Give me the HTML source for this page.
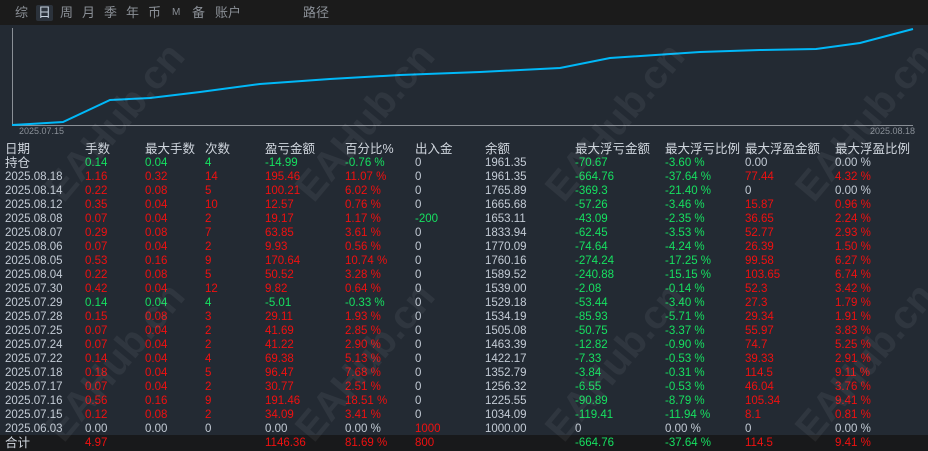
<!DOCTYPE html>
<html><head><meta charset="utf-8"><style>
*{margin:0;padding:0;box-sizing:border-box}
body{width:928px;height:450px;overflow:hidden;background:#232a33;font-family:"Liberation Sans","Noto Sans CJK SC",sans-serif;position:relative}
.top{position:absolute;left:0;top:0;width:928px;height:25px;background:#1b1b1b}
.tab{position:absolute;top:5px;font-size:13px;color:#8a8f96;line-height:16px}
.sel{background:#2b323b;color:#c8d4e0;border-radius:2px;padding:0 2px}
.r{position:absolute;left:0;width:928px;height:14px;font-size:11.5px;line-height:14px;color:#c4ccd6}
.r span{position:absolute;top:0;white-space:nowrap}
.h{font-size:12.5px;color:#d0d6de}
.g{color:#16e060}.d{color:#f01010}
.c1{left:5px}.c2{left:85px}.c3{left:145px}.c4{left:205px}.c5{left:265px}.c6{left:345px}.c7{left:415px}.c8{left:485px}.c9{left:575px}.c10{left:665px}.c11{left:745px}.c12{left:835px}
.tot{background:#18191b;height:16px;top:435px}
.wm{position:absolute;font-size:40px;font-weight:bold;color:rgba(255,255,255,0.06);transform:rotate(-50deg);white-space:nowrap;font-family:"Liberation Sans",sans-serif}
</style></head><body>
<div class="top"></div>
<span class="tab" style="left:15px">综</span>
<span class="tab sel" style="left:36px">日</span>
<span class="tab" style="left:60px">周</span>
<span class="tab" style="left:82px">月</span>
<span class="tab" style="left:104px">季</span>
<span class="tab" style="left:126px">年</span>
<span class="tab" style="left:148px">币</span>
<span class="tab" style="left:172px;font-size:10px">M</span>
<span class="tab" style="left:192px">备</span>
<span class="tab" style="left:215px">账户</span>
<span class="tab" style="left:303px">路径</span>
<svg style="position:absolute;left:0;top:25px" width="928" height="110">
<line x1="12.5" y1="3" x2="12.5" y2="100" stroke="#8a8f96" stroke-width="1"/>
<line x1="12" y1="100.5" x2="913" y2="100.5" stroke="#8a8f96" stroke-width="1"/>
<polyline fill="none" stroke="#00b8f8" stroke-width="2" points="12,100 30,99 63,97 110,75 150,73 200,67 260,59 330,54 400,50 480,47 560,43 610,33 700,27 760,25 816,24 860,18 913,4"/>
<text x="19" y="109" font-size="9" fill="#8a9098" font-family="Liberation Sans">2025.07.15</text>
<text x="870" y="109" font-size="9" fill="#8a9098" font-family="Liberation Sans">2025.08.18</text>
</svg>
<div class="r h" style="top:142px"><span class="c1">日期</span><span class="c2">手数</span><span class="c3">最大手数</span><span class="c4">次数</span><span class="c5">盈亏金额</span><span class="c6">百分比%</span><span class="c7">出入金</span><span class="c8">余额</span><span class="c9">最大浮亏金额</span><span class="c10">最大浮亏比例</span><span class="c11">最大浮盈金额</span><span class="c12">最大浮盈比例</span></div>
<div class="r" style="top:156px"><span class="c1 h">持仓</span><span class="c2 g">0.14</span><span class="c3 g">0.04</span><span class="c4 g">4</span><span class="c5 g">-14.99</span><span class="c6 g">-0.76 %</span><span class="c7">0</span><span class="c8">1961.35</span><span class="c9 g">-70.67</span><span class="c10 g">-3.60 %</span><span class="c11">0.00</span><span class="c12">0.00 %</span></div>
<div class="r" style="top:170px"><span class="c1">2025.08.18</span><span class="c2 d">1.16</span><span class="c3 d">0.32</span><span class="c4 d">14</span><span class="c5 d">195.46</span><span class="c6 d">11.07 %</span><span class="c7">0</span><span class="c8">1961.35</span><span class="c9 g">-664.76</span><span class="c10 g">-37.64 %</span><span class="c11 d">77.44</span><span class="c12 d">4.32 %</span></div>
<div class="r" style="top:184px"><span class="c1">2025.08.14</span><span class="c2 d">0.22</span><span class="c3 d">0.08</span><span class="c4 d">5</span><span class="c5 d">100.21</span><span class="c6 d">6.02 %</span><span class="c7">0</span><span class="c8">1765.89</span><span class="c9 g">-369.3</span><span class="c10 g">-21.40 %</span><span class="c11">0</span><span class="c12">0.00 %</span></div>
<div class="r" style="top:198px"><span class="c1">2025.08.12</span><span class="c2 d">0.35</span><span class="c3 d">0.04</span><span class="c4 d">10</span><span class="c5 d">12.57</span><span class="c6 d">0.76 %</span><span class="c7">0</span><span class="c8">1665.68</span><span class="c9 g">-57.26</span><span class="c10 g">-3.46 %</span><span class="c11 d">15.87</span><span class="c12 d">0.96 %</span></div>
<div class="r" style="top:212px"><span class="c1">2025.08.08</span><span class="c2 d">0.07</span><span class="c3 d">0.04</span><span class="c4 d">2</span><span class="c5 d">19.17</span><span class="c6 d">1.17 %</span><span class="c7 g">-200</span><span class="c8">1653.11</span><span class="c9 g">-43.09</span><span class="c10 g">-2.35 %</span><span class="c11 d">36.65</span><span class="c12 d">2.24 %</span></div>
<div class="r" style="top:226px"><span class="c1">2025.08.07</span><span class="c2 d">0.29</span><span class="c3 d">0.08</span><span class="c4 d">7</span><span class="c5 d">63.85</span><span class="c6 d">3.61 %</span><span class="c7">0</span><span class="c8">1833.94</span><span class="c9 g">-62.45</span><span class="c10 g">-3.53 %</span><span class="c11 d">52.77</span><span class="c12 d">2.93 %</span></div>
<div class="r" style="top:240px"><span class="c1">2025.08.06</span><span class="c2 d">0.07</span><span class="c3 d">0.04</span><span class="c4 d">2</span><span class="c5 d">9.93</span><span class="c6 d">0.56 %</span><span class="c7">0</span><span class="c8">1770.09</span><span class="c9 g">-74.64</span><span class="c10 g">-4.24 %</span><span class="c11 d">26.39</span><span class="c12 d">1.50 %</span></div>
<div class="r" style="top:254px"><span class="c1">2025.08.05</span><span class="c2 d">0.53</span><span class="c3 d">0.16</span><span class="c4 d">9</span><span class="c5 d">170.64</span><span class="c6 d">10.74 %</span><span class="c7">0</span><span class="c8">1760.16</span><span class="c9 g">-274.24</span><span class="c10 g">-17.25 %</span><span class="c11 d">99.58</span><span class="c12 d">6.27 %</span></div>
<div class="r" style="top:268px"><span class="c1">2025.08.04</span><span class="c2 d">0.22</span><span class="c3 d">0.08</span><span class="c4 d">5</span><span class="c5 d">50.52</span><span class="c6 d">3.28 %</span><span class="c7">0</span><span class="c8">1589.52</span><span class="c9 g">-240.88</span><span class="c10 g">-15.15 %</span><span class="c11 d">103.65</span><span class="c12 d">6.74 %</span></div>
<div class="r" style="top:282px"><span class="c1">2025.07.30</span><span class="c2 d">0.42</span><span class="c3 d">0.04</span><span class="c4 d">12</span><span class="c5 d">9.82</span><span class="c6 d">0.64 %</span><span class="c7">0</span><span class="c8">1539.00</span><span class="c9 g">-2.08</span><span class="c10 g">-0.14 %</span><span class="c11 d">52.3</span><span class="c12 d">3.42 %</span></div>
<div class="r" style="top:296px"><span class="c1">2025.07.29</span><span class="c2 g">0.14</span><span class="c3 g">0.04</span><span class="c4 g">4</span><span class="c5 g">-5.01</span><span class="c6 g">-0.33 %</span><span class="c7">0</span><span class="c8">1529.18</span><span class="c9 g">-53.44</span><span class="c10 g">-3.40 %</span><span class="c11 d">27.3</span><span class="c12 d">1.79 %</span></div>
<div class="r" style="top:310px"><span class="c1">2025.07.28</span><span class="c2 d">0.15</span><span class="c3 d">0.08</span><span class="c4 d">3</span><span class="c5 d">29.11</span><span class="c6 d">1.93 %</span><span class="c7">0</span><span class="c8">1534.19</span><span class="c9 g">-85.93</span><span class="c10 g">-5.71 %</span><span class="c11 d">29.34</span><span class="c12 d">1.91 %</span></div>
<div class="r" style="top:324px"><span class="c1">2025.07.25</span><span class="c2 d">0.07</span><span class="c3 d">0.04</span><span class="c4 d">2</span><span class="c5 d">41.69</span><span class="c6 d">2.85 %</span><span class="c7">0</span><span class="c8">1505.08</span><span class="c9 g">-50.75</span><span class="c10 g">-3.37 %</span><span class="c11 d">55.97</span><span class="c12 d">3.83 %</span></div>
<div class="r" style="top:338px"><span class="c1">2025.07.24</span><span class="c2 d">0.07</span><span class="c3 d">0.04</span><span class="c4 d">2</span><span class="c5 d">41.22</span><span class="c6 d">2.90 %</span><span class="c7">0</span><span class="c8">1463.39</span><span class="c9 g">-12.82</span><span class="c10 g">-0.90 %</span><span class="c11 d">74.7</span><span class="c12 d">5.25 %</span></div>
<div class="r" style="top:352px"><span class="c1">2025.07.22</span><span class="c2 d">0.14</span><span class="c3 d">0.04</span><span class="c4 d">4</span><span class="c5 d">69.38</span><span class="c6 d">5.13 %</span><span class="c7">0</span><span class="c8">1422.17</span><span class="c9 g">-7.33</span><span class="c10 g">-0.53 %</span><span class="c11 d">39.33</span><span class="c12 d">2.91 %</span></div>
<div class="r" style="top:366px"><span class="c1">2025.07.18</span><span class="c2 d">0.18</span><span class="c3 d">0.04</span><span class="c4 d">5</span><span class="c5 d">96.47</span><span class="c6 d">7.68 %</span><span class="c7">0</span><span class="c8">1352.79</span><span class="c9 g">-3.84</span><span class="c10 g">-0.31 %</span><span class="c11 d">114.5</span><span class="c12 d">9.11 %</span></div>
<div class="r" style="top:380px"><span class="c1">2025.07.17</span><span class="c2 d">0.07</span><span class="c3 d">0.04</span><span class="c4 d">2</span><span class="c5 d">30.77</span><span class="c6 d">2.51 %</span><span class="c7">0</span><span class="c8">1256.32</span><span class="c9 g">-6.55</span><span class="c10 g">-0.53 %</span><span class="c11 d">46.04</span><span class="c12 d">3.76 %</span></div>
<div class="r" style="top:394px"><span class="c1">2025.07.16</span><span class="c2 d">0.56</span><span class="c3 d">0.16</span><span class="c4 d">9</span><span class="c5 d">191.46</span><span class="c6 d">18.51 %</span><span class="c7">0</span><span class="c8">1225.55</span><span class="c9 g">-90.89</span><span class="c10 g">-8.79 %</span><span class="c11 d">105.34</span><span class="c12 d">9.41 %</span></div>
<div class="r" style="top:408px"><span class="c1">2025.07.15</span><span class="c2 d">0.12</span><span class="c3 d">0.08</span><span class="c4 d">2</span><span class="c5 d">34.09</span><span class="c6 d">3.41 %</span><span class="c7">0</span><span class="c8">1034.09</span><span class="c9 g">-119.41</span><span class="c10 g">-11.94 %</span><span class="c11 d">8.1</span><span class="c12 d">0.81 %</span></div>
<div class="r" style="top:422px"><span class="c1">2025.06.03</span><span class="c2">0.00</span><span class="c3">0.00</span><span class="c4">0</span><span class="c5">0.00</span><span class="c6">0.00 %</span><span class="c7 d">1000</span><span class="c8">1000.00</span><span class="c9">0</span><span class="c10">0.00 %</span><span class="c11">0</span><span class="c12">0.00 %</span></div>
<div class="r tot"><span class="c1 h" style="top:1px">合计</span><span class="c2 d" style="top:1px">4.97</span><span class="c5 d" style="top:1px">1146.36</span><span class="c6 d" style="top:1px">81.69 %</span><span class="c7 d" style="top:1px">800</span><span class="c9 g" style="top:1px">-664.76</span><span class="c10 g" style="top:1px">-37.64 %</span><span class="c11 d" style="top:1px">114.5</span><span class="c12 d" style="top:1px">9.41 %</span></div>
<div class="wm" style="left:20px;top:100px">EAHub.cn</div>
<div class="wm" style="left:270px;top:100px">EAHub.cn</div>
<div class="wm" style="left:520px;top:100px">EAHub.cn</div>
<div class="wm" style="left:770px;top:100px">EAHub.cn</div>
<div class="wm" style="left:20px;top:340px">EAHub.cn</div>
<div class="wm" style="left:270px;top:340px">EAHub.cn</div>
<div class="wm" style="left:520px;top:340px">EAHub.cn</div>
<div class="wm" style="left:770px;top:340px">EAHub.cn</div>
</body></html>
